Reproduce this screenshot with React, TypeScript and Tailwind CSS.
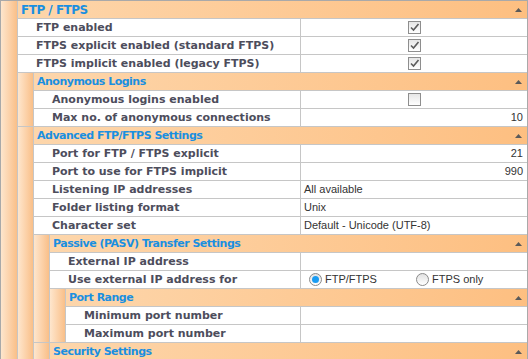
import React from "react";

const FONT = { fontFamily: '"Liberation Sans", Arial, sans-serif' };
const BOLD = { fontFamily: '"DejaVu Sans", Verdana, sans-serif' };

const Arrow = () => (
  <svg width="7" height="4" viewBox="0 0 7 4" className="mr-[5px] shrink-0">
    <polygon points="0,4 7,4 3.5,0" fill="#5a5a5a" />
  </svg>
);

const Check = ({ on }: { on: boolean }) => (
  <div className="w-[13px] h-[13px] border border-[#8e8e8e] bg-gradient-to-b from-[#e6e6e6] to-[#ffffff] flex items-center justify-center">
    {on && (
      <svg width="11" height="11" viewBox="0 0 11 11">
        <path d="M2 5.5 L4.5 8 L9.5 2" stroke="#5c5c5c" strokeWidth="1.6" fill="none" />
      </svg>
    )}
  </div>
);

const Radio = ({ on, label }: { on: boolean; label: string }) => (
  <div className="flex items-center w-[107px] shrink-0">
    <div className="w-[13px] h-[13px] rounded-full border border-[#8a8a8a] bg-gradient-to-b from-[#e2e2e2] to-[#ffffff] flex items-center justify-center">
      {on && <div className="w-[7px] h-[7px] rounded-full bg-[#1a9cf2]" />}
    </div>
    <span className="ml-[3px] text-[#333]">{label}</span>
  </div>
);

const Row = ({
  label,
  children,
  right,
  center,
}: {
  label: string;
  children?: React.ReactNode;
  right?: boolean;
  center?: boolean;
}) => (
  <div className="flex h-[18px] border-t border-[#c6c6c6] bg-white">
    <div
      className="flex-1 min-w-0 flex items-center pl-[18px] font-bold text-[11px] text-[#4d4d5c] whitespace-nowrap overflow-hidden"
      style={BOLD}
    >
      {label}
    </div>
    <div
      className={
        "w-[227px] shrink-0 border-l border-[#c6c6c6] flex items-center whitespace-nowrap text-[#333] " +
        (right ? "justify-end pr-[4px]" : center ? "justify-center" : "pl-[3px]")
      }
    >
      {children}
    </div>
  </div>
);

const Group = ({
  title,
  first,
  children,
}: {
  title: string;
  first?: boolean;
  children?: React.ReactNode;
}) => (
  <div className={"flex " + (first ? "" : "border-t border-[#c6c6c6]")}>
    <div
      className={
        (first ? "w-[17px] " : "w-[16px] ") +
        "shrink-0 border-r border-[#c6c6c6] bg-gradient-to-r from-[#fee6cd] to-[#f9bf88]"
      }
    />
    <div className="flex-1 min-w-0 flex flex-col">
      <div className="h-[17px] flex items-center justify-between bg-gradient-to-r from-[#fdd6ab] to-[#fdbf81]">
        <span
          className={
            "pl-[3px] font-bold text-[#1a8fe0] whitespace-nowrap tracking-[-0.5px] " +
            (first ? "text-[12px]" : "text-[11px]")
          }
          style={BOLD}
        >
          {title}
        </span>
        <Arrow />
      </div>
      {children}
    </div>
  </div>
);

export default function App() {
  return (
    <div
      className="w-[528px] h-[359px] overflow-hidden bg-white border-t border-l border-r border-[#a9a9a9] text-[11px] leading-none"
      style={FONT}
    >
      <Group title="FTP / FTPS" first>
        <Row label="FTP enabled" center>
          <Check on />
        </Row>
        <Row label="FTPS explicit enabled (standard FTPS)" center>
          <Check on />
        </Row>
        <Row label="FTPS implicit enabled (legacy FTPS)" center>
          <Check on />
        </Row>
        <Group title="Anonymous Logins">
          <Row label="Anonymous logins enabled" center>
            <Check on={false} />
          </Row>
          <Row label="Max no. of anonymous connections" right>
            10
          </Row>
        </Group>
        <Group title="Advanced FTP/FTPS Settings">
          <Row label="Port for FTP / FTPS explicit" right>
            21
          </Row>
          <Row label="Port to use for FTPS implicit" right>
            990
          </Row>
          <Row label="Listening IP addresses">All available</Row>
          <Row label="Folder listing format">Unix</Row>
          <Row label="Character set">Default - Unicode (UTF-8)</Row>
          <Group title="Passive (PASV) Transfer Settings">
            <Row label="External IP address" />
            <Row label="Use external IP address for">
              <div className="flex items-center pl-[5px]">
                <Radio on label="FTP/FTPS" />
                <Radio on={false} label="FTPS only" />
              </div>
            </Row>
            <Group title="Port Range">
              <Row label="Minimum port number" />
              <Row label="Maximum port number" />
            </Group>
          </Group>
          <Group title="Security Settings" />
        </Group>
      </Group>
    </div>
  );
}
